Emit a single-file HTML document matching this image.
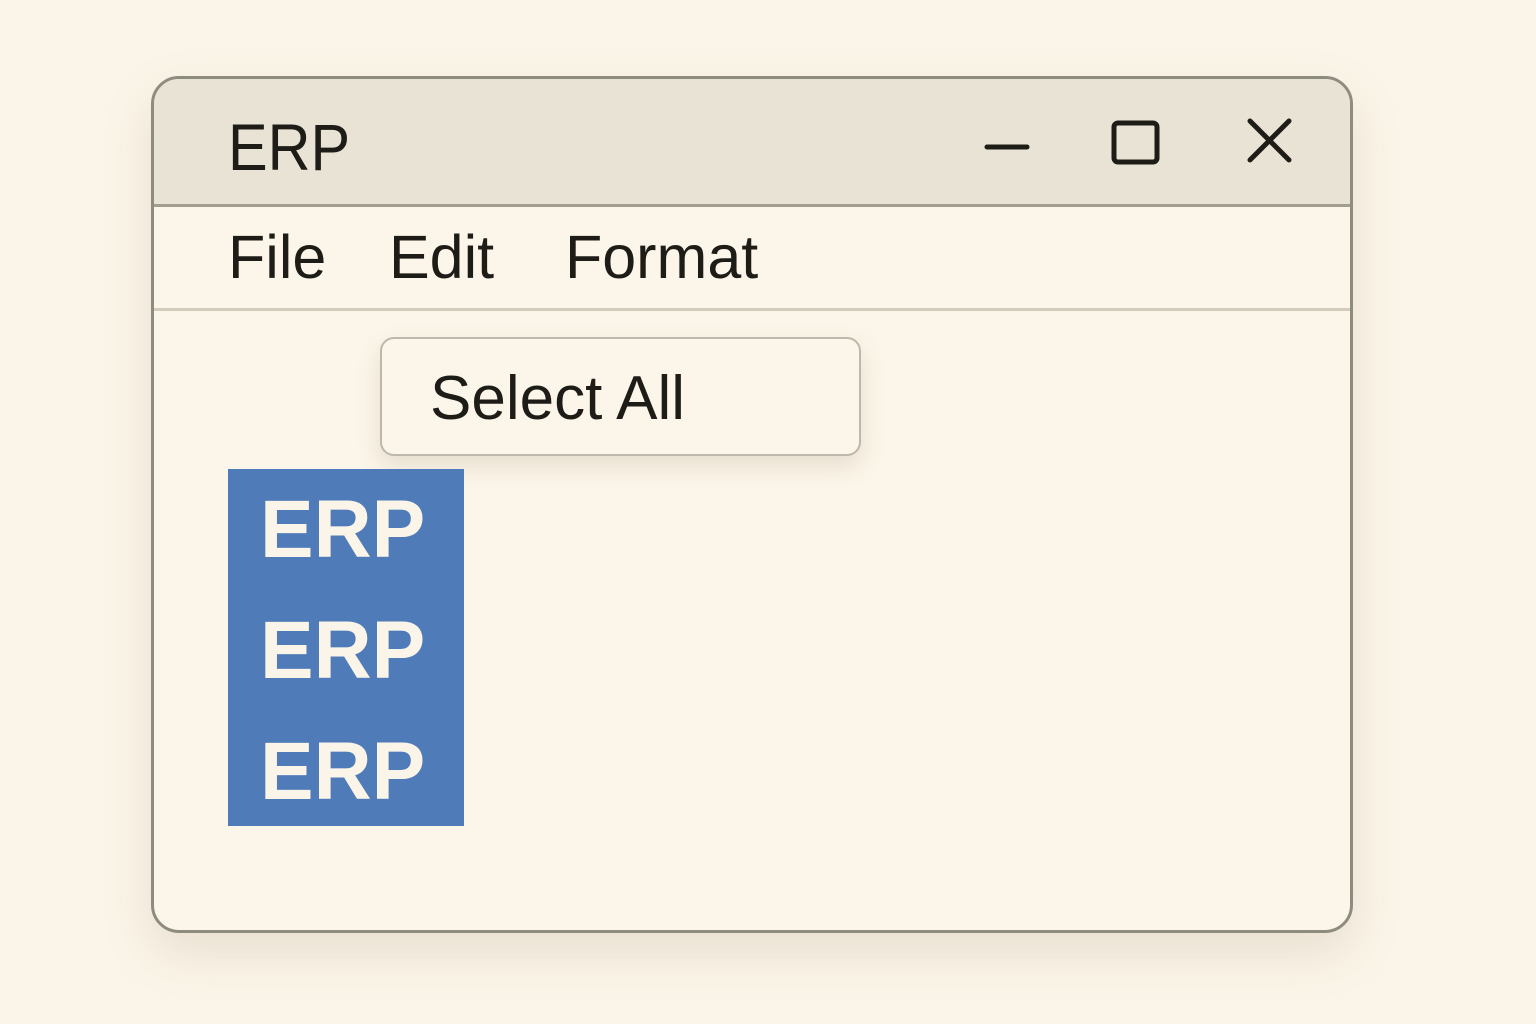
<!DOCTYPE html>
<html><head><style>
body{margin:0;width:1536px;height:1024px;background:#fbf5e9;position:relative;overflow:hidden;font-family:"Liberation Sans",sans-serif;color:#1e1c17}
.win{position:absolute;left:151px;top:76px;width:1196px;height:851px;border:3px solid #8e8b7f;border-radius:28px;background:#fcf6ea;overflow:hidden;box-shadow:0 20px 50px rgba(120,100,60,0.15)}
.title{position:absolute;left:0;top:0;width:100%;height:125px;background:#e9e3d5;border-bottom:3px solid #a19d91}
.menu{position:absolute;left:0;top:128px;width:100%;height:101px;border-bottom:3px solid #d3ccbd}
.t{position:absolute;white-space:nowrap}
.dd{position:absolute;left:380px;top:337px;width:477px;height:115px;border:2px solid #bdb8ab;border-radius:14px;background:#fcf6ea;box-shadow:0 10px 25px rgba(100,80,40,0.15)}
.sel{position:absolute;left:228px;top:469px;width:236px;height:357px;background:#4f7cb9}
.e{position:absolute;left:32px;color:#fbf5e9;font-size:82px;font-weight:bold;line-height:1;transform:scaleX(0.98);transform-origin:left}
</style></head><body>
<div class="win">
<div class="title"><div class="t" style="left:74px;top:35px;font-size:66px;line-height:1;transform:scaleX(0.9);transform-origin:left">ERP</div></div>
<div class="menu">
<div class="t" style="left:74px;top:20px;font-size:61px;line-height:1">File</div>
<div class="t" style="left:235px;top:20px;font-size:61px;line-height:1">Edit</div>
<div class="t" style="left:411px;top:20px;font-size:61px;line-height:1">Format</div>
</div>
</div>
<svg style="position:absolute;left:0;top:0" width="1536" height="200">
<g stroke="#1e1c17" stroke-width="5" fill="none" stroke-linecap="round">
<line x1="987" y1="147" x2="1027" y2="147"/>
<rect x="1114" y="123" width="43" height="39" rx="4"/>
<line x1="1250" y1="121" x2="1289" y2="160"/><line x1="1289" y1="121" x2="1250" y2="160"/>
</g></svg>
<div class="dd"><div class="t" style="left:48px;top:29px;font-size:62px;line-height:1">Select All</div></div>
<div class="sel">
<div class="e" style="top:20px">ERP</div>
<div class="e" style="top:141px">ERP</div>
<div class="e" style="top:262px">ERP</div>
</div>
</body></html>
